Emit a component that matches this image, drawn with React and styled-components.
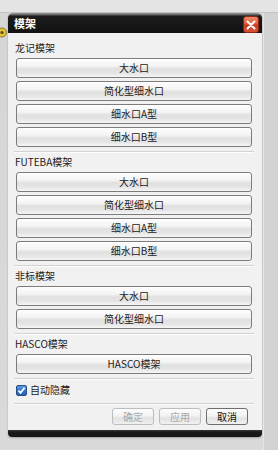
import React, { useState } from "react";
import styled, { createGlobalStyle } from "styled-components";

const GlobalStyle = createGlobalStyle`
  html, body {
    margin: 0;
    padding: 0;
  }
  body {
    background: #d9d9d9;
    font-family: "Noto Sans CJK SC", "Liberation Sans", sans-serif;
  }
`;

const groups = [
  { title: "龙记模架", items: ["大水口", "简化型细水口", "细水口A型", "细水口B型"] },
  { title: "FUTEBA模架", items: ["大水口", "简化型细水口", "细水口A型", "细水口B型"] },
  { title: "非标模架", items: ["大水口", "简化型细水口"] },
  { title: "HASCO模架", items: ["HASCO模架"] },
];

const App = () => {
  const [autoHide, setAutoHide] = useState(true);

  return (
    <>
      <GlobalStyle />
      <Desktop>
        <LeftGutter>
          <DesktopIcon width="8" height="11" viewBox="0 0 8 11">
            <circle cx="2" cy="5.5" r="4.5" fill="#e2c43a" stroke="#8a7a2a" strokeWidth="1" />
            <circle cx="2" cy="5.5" r="1.6" fill="#5a5020" />
          </DesktopIcon>
        </LeftGutter>
        <Window>
          <TitleBar>
            <Title>模架</Title>
            <CloseButton>
              <svg width="10" height="10" viewBox="0 0 10 10">
                <path d="M1.5 1.5 L8.5 8.5 M8.5 1.5 L1.5 8.5" stroke="#fff" strokeWidth="2" strokeLinecap="round" />
              </svg>
            </CloseButton>
          </TitleBar>
          <Body>
            {groups.map((g) => (
              <Section key={g.title}>
                <Label>{g.title}</Label>
                <ButtonList>
                  {g.items.map((item, i) => (
                    <WideButton key={i}>{item}</WideButton>
                  ))}
                </ButtonList>
                <Separator />
              </Section>
            ))}
            <CheckRow onClick={() => setAutoHide(!autoHide)}>
              <CheckBox $checked={autoHide}>
                {autoHide && (
                  <svg width="9" height="9" viewBox="0 0 9 9">
                    <path d="M1.5 4.6 L3.6 6.8 L7.6 1.8" stroke="#fff" strokeWidth="1.8" fill="none" />
                  </svg>
                )}
              </CheckBox>
              <CheckText>自动隐藏</CheckText>
            </CheckRow>
            <Separator />
            <Footer>
              <FooterButton $disabled>确定</FooterButton>
              <FooterButton $disabled>应用</FooterButton>
              <FooterButton>取消</FooterButton>
            </Footer>
          </Body>
          <BottomBar />
        </Window>
        <RightGutter />
      </Desktop>
    </>
  );
};

const Desktop = styled.div`
  display: flex;
  height: 450px;
  background: linear-gradient(to bottom, #e4e4e4 0, #e4e4e4 12px, #c4c4c4 12px, #c4c4c4 13px, #d6d6d6 13px, #dadada 100%);
`;

const LeftGutter = styled.div`
  width: 8px;
  display: flex;
  flex-direction: column;
  padding-top: 27px;
  box-sizing: border-box;
`;

const DesktopIcon = styled.svg`
  display: block;
`;

const Window = styled.div`
  width: 254px;
  margin-top: 13px;
  align-self: flex-start;
  display: flex;
  flex-direction: column;
  border-radius: 5px 5px 4px 4px;
  overflow: hidden;
  background: #f1f1f1;
  box-shadow: 0 1px 2px rgba(0, 0, 0, 0.25);
`;

const TitleBar = styled.div`
  height: 20px;
  display: flex;
  align-items: center;
  justify-content: space-between;
  padding: 0 3px 0 6px;
  background: linear-gradient(to bottom, #9a9a9a 0, #5a5a5a 2px, #1c1c1c 3px, #121212 100%);
`;

const Title = styled.span`
  color: #fff;
  font-size: 11px;
  font-weight: bold;
  line-height: 20px;
`;

const CloseButton = styled.div`
  width: 16px;
  height: 17px;
  margin-top: 3px;
  box-sizing: border-box;
  display: flex;
  align-items: center;
  justify-content: center;
  border: 1px solid #8a2a16;
  border-radius: 3px;
  background: linear-gradient(to bottom, #f08a6a 0%, #e2583a 45%, #c83c20 55%, #d85236 100%);
`;

const Body = styled.div`
  padding: 7px 10px 0 7px;
  display: flex;
  flex-direction: column;
`;

const Section = styled.div`
  display: flex;
  flex-direction: column;
`;

const Label = styled.div`
  height: 16px;
  line-height: 16px;
  font-size: 10px;
  color: #222;
  overflow: hidden;
`;

const ButtonList = styled.div`
  display: flex;
  flex-direction: column;
  gap: 3px;
  margin-top: 2px;
  padding-left: 1px;
`;

const WideButton = styled.div`
  height: 20px;
  box-sizing: border-box;
  border: 1px solid #7c7c7c;
  border-radius: 3px;
  background: linear-gradient(to bottom, #fdfdfd 0%, #f4f4f4 40%, #e0e0e0 55%, #e6e6e6 80%, #f6f6f6 100%);
  box-shadow: inset 0 1px 0 #fff;
  text-align: center;
  font-size: 10px;
  line-height: 18px;
  color: #222;
  overflow: hidden;
`;

const Separator = styled.div`
  height: 1px;
  margin: 4px -2px 1px -1px;
  background: #d2d2d2;
  border-bottom: 1px solid #fdfdfd;
`;

const CheckRow = styled.div`
  height: 18px;
  margin-left: 1px;
  display: flex;
  align-items: center;
  gap: 3px;
  cursor: pointer;
`;

const CheckBox = styled.div`
  width: 11px;
  height: 11px;
  box-sizing: border-box;
  display: flex;
  align-items: center;
  justify-content: center;
  border: 1px solid #2a4f86;
  border-radius: 2px;
  background: ${(p) =>
    p.$checked
      ? "linear-gradient(to bottom, #5f9ae6 0%, #2d6fcb 60%, #2a62b8 100%)"
      : "#fff"};
`;

const CheckText = styled.span`
  font-size: 10px;
  color: #222;
  line-height: 18px;
`;

const Footer = styled.div`
  display: flex;
  justify-content: flex-end;
  gap: 5px;
  padding: 2px 4px 5px 0;
`;

const FooterButton = styled.div`
  width: 42px;
  height: 17px;
  box-sizing: border-box;
  border: 1px solid ${(p) => (p.$disabled ? "#bdbdbd" : "#6e6e6e")};
  border-radius: 3px;
  background: linear-gradient(to bottom, #fdfdfd 0%, #f3f3f3 45%, #e2e2e2 60%, #f0f0f0 100%);
  text-align: center;
  font-size: 10px;
  line-height: 15px;
  color: ${(p) => (p.$disabled ? "#a9a9a9" : "#111")};
`;

const BottomBar = styled.div`
  height: 7px;
  background: linear-gradient(to bottom, #3a3a3a 0, #1a1a1a 2px, #141414 100%);
`;

const RightGutter = styled.div`
  flex: 1;
  margin-left: 1px;
  border-left: 1px solid #e6e6e6;
  margin-top: 13px;
  background: #d2d2d2;
`;

export default App;
